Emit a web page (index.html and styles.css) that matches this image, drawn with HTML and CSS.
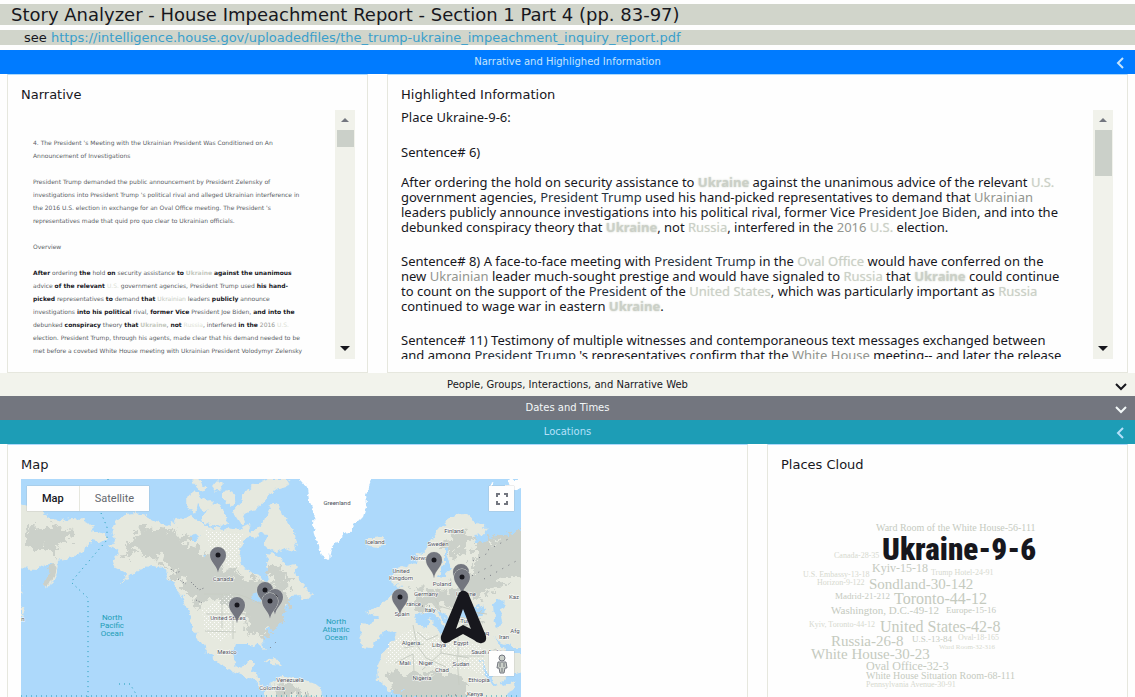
FILE: index.html
```html
<!DOCTYPE html>
<html lang="en">
<head>
<meta charset="utf-8">
<title>Story Analyzer</title>
<link rel="stylesheet" href="styles.css">
</head>
<body>
<header>
  <h1 class="title">Story Analyzer - House Impeachment Report - Section 1 Part 4 (pp. 83-97)</h1>
  <p class="source">see <a href="#">https://intelligence.house.gov/uploadedfiles/the_trump-ukraine_impeachment_inquiry_report.pdf</a></p>
</header>
<main>
  <button class="bar bar-blue" type="button">Narrative and Highlighed Information
    <svg class="chev" viewBox="0 0 12 12"><path d="M8 1L3 6l5 5"/></svg></button>
  <div class="row">
    <section class="card small">
      <h2>Narrative</h2>
      <div class="scroller">
        <div class="narrative">
          <p>4. The President 's Meeting with the Ukrainian President Was Conditioned on An<br>Announcement of Investigations</p>
          <p>President Trump demanded the public announcement by President Zelensky of<br>investigations into President Trump 's political rival and alleged Ukrainian interference in<br>the 2016 U.S. election in exchange for an Oval Office meeting. The President 's<br>representatives made that quid pro quo clear to Ukrainian officials.</p>
          <p>Overview</p>
          <p><b>After</b> ordering <b>the</b> hold <b>on</b> security assistance <b>to</b> <b class="pl">Ukraine</b> <b>against the unanimous</b><br>advice <b>of the relevant</b> <span class="pl faint">U.S.</span> government agencies, President Trump used <b>his hand-</b><br><b>picked</b> representatives <b>to</b> demand <b>that</b> <span class="pl">Ukrainian</span> leaders <b>publicly</b> announce<br>investigations <b>into his political</b> rival, <b>former Vice</b> President Joe Biden, <b>and into the</b><br>debunked <b>conspiracy</b> theory <b>that</b> <b class="pl">Ukraine</b>, <b>not</b> <span class="pl faint">Russia</span>, interfered <b>in the</b> <span class="date">2016</span> <span class="pl faint">U.S.</span><br>election. President Trump, through his agents, made clear that his demand needed to be<br>met before a coveted White House meeting with Ukrainian President Volodymyr Zelensky</p>
        </div>
        <div class="track" aria-hidden="true"><svg viewBox="0 0 10 6"><path d="M1 5l4-4 4 4z"/></svg><i class="thumb"></i><svg class="down" viewBox="0 0 10 6"><path d="M0 0h10L5 5z"/></svg></div>
      </div>
    </section>
    <section class="card large">
      <h2>Highlighted Information</h2>
      <div class="scroller">
        <div class="info">
          <p class="lead">Place Ukraine-9-6:</p>
          <p>Sentence# 6)</p>
          <p class="first">After ordering the hold on security assistance to <b class="hot">Ukraine</b> against the unanimous advice of the relevant <span class="place">U.S.</span><br>government agencies, <span class="who">President Trump</span> used his hand-picked representatives to demand that <span class="date">Ukrainian</span><br>leaders publicly announce investigations into his political rival, former Vice <span class="who">President Joe Biden</span>, and into the<br>debunked conspiracy theory that <b class="hot">Ukraine</b>, not <span class="place">Russia</span>, interfered in the <span class="date">2016</span> <span class="place">U.S.</span> election.</p>
          <p>Sentence# 8) A face-to-face meeting with <span class="who">President Trump</span> in the <span class="place">Oval Office</span> would have conferred on the<br>new <span class="date">Ukrainian</span> leader much-sought prestige and would have signaled to <span class="place">Russia</span> that <b class="hot">Ukraine</b> could continue<br>to count on the support of the <span class="who">President</span> of the <span class="place">United States</span>, which was particularly important as <span class="place">Russia</span><br>continued to wage war in eastern <b class="hot">Ukraine</b>.</p>
          <p>Sentence# 11) Testimony of multiple witnesses and contemporaneous text messages exchanged between<br>and among <span class="who">President Trump</span> 's representatives confirm that the <span class="date">White House</span> meeting-- and later the release</p>
        </div>
        <div class="track" aria-hidden="true"><svg viewBox="0 0 10 6"><path d="M1 5l4-4 4 4z"/></svg><i class="thumb tall"></i><svg class="down" viewBox="0 0 10 6"><path d="M0 0h10L5 5z"/></svg></div>
      </div>
    </section>
  </div>
  <button class="bar bar-light" type="button">People, Groups, Interactions, and Narrative Web
    <svg class="chev" viewBox="0 0 12 12"><path d="M1 4l5 5 5-5"/></svg></button>
  <button class="bar bar-gray" type="button">Dates and Times
    <svg class="chev" viewBox="0 0 12 12"><path d="M1 4l5 5 5-5"/></svg></button>
  <button class="bar bar-teal" type="button">Locations
    <svg class="chev" viewBox="0 0 12 12"><path d="M8 1L3 6l5 5"/></svg></button>
  <div class="row">
    <section class="card large">
      <h2>Map</h2>
      <div class="map">
        <svg class="world" viewBox="21 479 500 218" role="img" aria-label="World map with story places">
          <defs>
            <pattern id="light" width="4" height="4" patternUnits="userSpaceOnUse"><path class="grain2" d="M0 0h1v1H0zM2 2h1v1H2z"/></pattern>
            <filter id="coast" filterUnits="userSpaceOnUse" x="11" y="469" width="520" height="240"><feTurbulence type="fractalNoise" baseFrequency="0.14" numOctaves="3" seed="4"/><feDisplacementMap in="SourceGraphic" scale="9" xChannelSelector="R" yChannelSelector="G"/></filter>
            <filter id="relief" filterUnits="userSpaceOnUse" x="11" y="469" width="520" height="240"><feTurbulence type="fractalNoise" baseFrequency="0.12" numOctaves="4" seed="9"/><feDisplacementMap in="SourceGraphic" scale="26" xChannelSelector="R" yChannelSelector="G"/></filter>
            <g id="pin"><path d="M0 17C-1 9-8 6-8-1A8 8 0 0 1 8-1C8 6 1 9 0 17Z"/><circle class="dot" r="2.5" cy="-1"/></g>
          </defs>
          <rect class="sea" x="21" y="479" width="500" height="240"/>
          <g filter="url(#coast)">
          <g class="land">
            <path d="M11 500l25 8 16 10 10 3 9-3 9 1 8 4 6 6 9 4 4 6-3 5-8-2-7-1-4 5-1 7-9 3-8 3-9 2-1 11-4 9-6 8-2-3 1-8 5-8 2-7-8 2-6 4-28-1z"/>
            <path d="M21 586l2 5-2 5zM21 605l3 4-3 12z"/>
            <path d="M112 526l6-6 7-6 10-1 10 3 8 4 14 4 10-5 13-2 9 4 8 5 15 4 7-3 11 2 8-4 4 8-6 8-6 8-1 11 1 6 8 4 11 5 5 9 5-9-3-10 1-12 7 1 8 6 5 6 7-2 2 11 6 9 3 7-6 4-8 1-5 8-7 8-7 7-5 12-4 9 1 10-6-5-9-1-15 0-3 8 2 10 8 6 5-6 9 0-4 8 6 4 2 8 6 6 4-1 4 4-12-2-7-9-17-7-16-8-12-11-11-17-5-8-5-17-5-14-11-14-9-16-12-2-12 3-10 9-9 6 8-10-13-7-3-8 7-7-8-6 4-5-2-7z"/>
            <path d="M186 501l4-9 8 1 7 8 7-1-2 7-8 2-5-5-2 8-5-2zM202 517l5-10 9-4 8 7 3 12-7 6-10-3-7-3zM191 481l9-2 7 9-8 2zM211 487l7-8 5 5-7 9zM225 491l8-2 3 9-5 7-6-4zM236 518l6-8 4 8-5 8zM240 502l7-11 8-7 16-5h17l2 6-15 5-6 8-10 9-13 4-8 7-7-4zM249 534l12-8 7-19 10-5 5 13 10 15 4 16-5 6-9-4-9 4-10-7 3-11-6-1-7 7z"/>
            <path d="M298 591l9-3 5 7-8 5-6-4z"/>
            <path d="M367 539l7 0 8-1 3 5-6 4-8-1-5-2z"/>
            <path d="M396 570l3-3 5 1-1 7 4 3 4 3-3 5-11 1 4-5-4-2 3-4zM389 577l5-1 1 5-5 3z"/>
            <path d="M416 562l1-7 5-3 6-5 5-9 6-8 8-9 8-6 10-1 8 7 12 5 1 8-14 1 2 7 10 2 14-6 12-2 21-7V665h-10l-18 7-14 12-1-9-8-6-8-13-6-15-7-2-9 0-8 1-8-3-8-1-9 8 2-9-7 1-2-5-11 1-9 2-4-4-10 12-7 6-9-1-1-23 12 1 6-8-10-4-1-4 13-2 11-9 9-6 3-8-4-1-3 2-5-7z"/>
            <path d="M397 632l14-8 13-2 3 8 10 5 8 2 10-1 7 3 17 2 5 16 7 12 6 9 6 7 14-5-9 18-2 22h-83l-3-20-11-11-17 3-14-11-1-14 5-11z"/>
            <path d="M479 651l6-8 15-8 31 8v26l-33 12-7-13z"/>
            <path d="M259 719l6-26 11-15 10-3 17 5 14 5 8 13 9 21zM263 659l17 2 4 4-13-1z"/>
          </g>
          <g class="forest" filter="url(#relief)">
            <path d="M45 529l15-3 13 6-3 7-10 5-7 14-7-9-13-1-7-16zM132 532l13-4 19 2 14 4 13 12 21 8 17 17 15 7 18 3 14 9 20 3-6 14-8 10-10 17-24 2-4-22-20-13-20-2-4 11-6-3-6-16-9-12-14-19-27-7-16 5zM270 566l13 5 10 8-16 11-7-5zM444 542l11-12 15 3-3 14-12 7-2 7zM474 549l23-12 24-5h10v42l-26 9-38 19-30 5-13-10 7-8 21 1 8-12 14-6zM388 671l35 2 27-1 19 11v38h-47l-6-23-18-3z"/>
            <path d="M277 683l23 3 16 13h-44zM460 622l20-4 9 9-15 4zM412 593l20 1 11 7-22 10-7-5z"/>
          </g>
          <path class="forest" d="M46 586l-2-4 8-18 4 3-4 13z"/>
          <g class="sea">
            <path d="M190 536l5-3 4 3-3 5-6 0zM202 553l4 1-2 4zM250 596l7-4 7 8-8 5zM443 547l5-1-3 10 7 12-8 9-6-1 5-11zM413 618l10-6 8-2 9 10 4 9-3 6-6-10-5-5-4 7-8-3zM435 610l7 3 12 12 2 9-7-1-6-12zM461 610l7-6 6 5 8-5 3 7-8 6-12 1-5-3zM493 604l6-5 6 6-4 4 2 15-5 3-4-8zM494 635l6 7 13 5 8 0v6l-12 0-9-7zM477 655l5 8 8 12 8 11-3 1-10-13z"/>
          </g>
          <path class="ice" d="M280 469h10l11 11 7 8 2 13 4 9-1 14 2 8 2 14 5 10 7 4 2-12 8-10 12-9 12-12 4-13-1-10 10-25zM490 482l4 2-5 2zM505 487l4-6 12-2v9l-10 3z"/>
          </g>
          <path class="tundra" d="M205 530l22 3 16 0-5 22 2 12-12 0-18-18zM202 610l30-18 3 40-15 10-15-10zM388 644l22-15 30 9 41 7 8 33-19-8-50-4-34-2z"/>
          <path class="borders" d="M204 594h33l9 3 15 7M222 594v34m11-31v42m-27-25h44M205 631l31 1M413 625l4 20 9 13 20 9m-5-31v17l-19 17m19-17l28 5m-11-21v19l26 0m-27 0l2 29m-64-22l18-9 1 18m10-28l-20 4m60-18l22 11m-4-31l-9 10-15 2m3-24l11 14 15 2m-53-18l5 10 14 4m-15 25l-11 5-10-8m69 22l10-5 10 14m-38 65l15 4m-33-1l-6 19"/>
          <path class="dateline" d="M108 479v3m-7 31l6 14v13l-36 42 17 16v111M21 696h500M119 684h11l6 10"/>
          <path class="rivers" d="M171 569l5 4 5-2m-3 8l8 5m5-2l8 8 5-2m-8 12l6 3"/>
          <path class="towns" d="M473 561l15-8m-22 26l28-15m-10 15l34-19m-30-10l24-13M422 606h14M448 695h14m-178-2h28m-42-45l8-8"/>
          <g class="ocean"><text x="112" y="620">North</text><text x="112" y="628">Pacific</text><text x="112" y="636">Ocean</text><text x="336" y="624">North</text><text x="336" y="632">Atlantic</text><text x="336" y="640">Ocean</text></g>
          <g class="names">
            <text x="223" y="581">Canada</text><text x="228" y="620">United States</text><text x="227" y="654">Mexico</text><text x="337" y="505">Greenland</text><text x="375" y="544">Iceland</text><text x="454" y="533">Finland</text><text x="438" y="546">Sweden</text><text x="421" y="560">Norway</text><text x="401" y="573">United</text><text x="401" y="580">Kingdom</text><text x="442" y="586">Poland</text><text x="426" y="596">Germany</text><text x="412" y="606">France</text><text x="430" y="612">Italy</text><text x="402" y="616">Spain</text><text x="466" y="596">Ukraine</text><text x="469" y="623">Turkey</text><text x="484" y="635">Iraq</text><text x="504" y="639">Iran</text><text x="514" y="599">Kaz</text><text x="515" y="633">Afg</text><text x="411" y="645">Algeria</text><text x="439" y="647">Libya</text><text x="461" y="645">Egypt</text><text x="488" y="654">Saudi Arabia</text><text x="405" y="665">Mali</text><text x="426" y="665">Niger</text><text x="461" y="666">Sudan</text><text x="442" y="672">Chad</text><text x="422" y="680">Nigeria</text><text x="479" y="682">Ethiopia</text><text x="475" y="696">Kenya</text><text x="290" y="682">Venezuela</text><text x="272" y="690">Colombia</text><text x="23" y="621">n</text>
          </g>
          <g class="pins">
            <use href="#pin" x="218" y="556"/><use href="#pin" x="237" y="606"/><use href="#pin" x="265" y="591"/><use href="#pin" x="275" y="598"/><use href="#pin" x="270" y="602"/><use href="#pin" x="434" y="561"/><use href="#pin" x="400" y="598"/><use href="#pin" x="461" y="573"/><use href="#pin" x="462" y="578"/>
          </g>
          <path class="arrow" fill-rule="evenodd" d="M459 593q4-5 9 0l18 43q1 6-4 7-4 1-8-3l-11-6-11 6q-4 4-8 3-4-2-3-7zM463 609l-7 20 7-4 8 4z"/>
        </svg>
        <div class="types"><button type="button" class="on">Map</button><button type="button">Satellite</button></div>
        <button type="button" class="tool full" aria-label="Full screen"><svg viewBox="0 0 12 12"><path d="M1 4V1h3M8 1h3v3M11 8v3H8M4 11H1V8"/></svg></button>
        <button type="button" class="tool man" aria-label="Street view"><svg viewBox="0 0 12 20"><circle cx="6" cy="4" r="3"/><path d="M2 8h8l1 6H9l-1 5H4l-1-5H1zM6 14v4M4 9v4m4-4v4"/></svg></button>
      </div>
    </section>
    <section class="card small">
      <h2>Places Cloud</h2>
      <svg class="cloud" viewBox="781 479 334 218" role="img" aria-label="Places cloud">
        <text class="s10" x="876" y="531">Ward Room of the White House-56-111</text>
        <text class="top" x="882" y="560">Ukraine-9-6</text>
        <text class="s8 pale" x="834" y="558">Canada-28-35</text>
        <text class="s12" x="872" y="572">Kyiv-15-18</text>
        <text class="s8 pale" x="803" y="577">U.S. Embassy-13-18</text>
        <text class="s8 pale" x="931" y="575">Trump Hotel-24-91</text>
        <text class="s8 pale" x="817" y="585">Horizon-9-122</text>
        <text class="s15" x="869" y="589">Sondland-30-142</text>
        <text class="s9" x="835" y="599">Madrid-21-212</text>
        <text class="s16" x="894" y="604">Toronto-44-12</text>
        <text class="s11" x="831" y="614">Washington, D.C.-49-12</text>
        <text class="s9" x="946" y="613">Europe-15-16</text>
        <text class="s8 pale" x="809" y="627">Kyiv, Toronto-44-12</text>
        <text class="s16" x="880" y="632">United States-42-8</text>
        <text class="s15" x="831" y="646">Russia-26-8</text>
        <text class="s9" x="912" y="642">U.S.-13-84</text>
        <text class="s8 pale" x="958" y="640">Oval-18-165</text>
        <text class="s7 pale" x="939" y="649">Ward Room-32-316</text>
        <text class="s15" x="811" y="659">White House-30-23</text>
        <text class="s12" x="866" y="670">Oval Office-32-3</text>
        <text class="s10" x="866" y="679">White House Situation Room-68-111</text>
        <text class="s8 pale" x="866" y="687">Pennsylvania Avenue-30-91</text>
      </svg>
    </section>
  </div>
</main>
</body>
</html>
```
FILE: styles.css
```css
* { box-sizing: border-box; }
html, body { height: 100%; }
body { margin: 0; overflow: hidden; background: #fefefe; color: #17171d; font-family: Verdana, "DejaVu Sans", sans-serif; font-size: 13px; }
h1, h2, p { margin: 0; font-weight: normal; white-space: nowrap; }
header { padding-top: 4px; }
.title { height: 21px; padding-left: 11px; background: #d1d5cb; font-size: 18px; line-height: 22px; }
.source { height: 15px; margin: 5px 0; padding-left: 24px; background: #d1d5cb; line-height: 15px; }
.source a { color: #3a9fcb; text-decoration: none; }

.bar { position: relative; display: block; width: 100%; height: 24px; margin: 0; padding: 0; border: 0; font-family: inherit; font-size: 10px; line-height: 24px; text-align: center; color: #f3f8f8; }
.bar-blue { background: #007bff; color: #c5e4fb; }
.bar-light { height: 23px; background: #f2f3ec; color: #17171d; }
.bar-gray { background: #73767f; }
.bar-teal { background: #1d9db6; color: #b5e0fa; }
.chev { position: absolute; right: 8px; top: 7px; width: 12px; height: 12px; fill: none; stroke: currentColor; stroke-width: 2; }

.row { display: grid; grid-template-columns: repeat(12, 1fr); column-gap: 19px; padding: 0 7px; }
.card { min-width: 0; padding: 12px 12px 13px 13px; border: 1px solid #e6e7de; border-top-color: #add9fb; }
.small { grid-column: span 4; }
.large { grid-column: span 8; }
h2 { font-size: 13px; line-height: 16px; }
.scroller { display: flex; height: 249px; margin-top: 7px; overflow: hidden; }
.narrative, .info { flex: 1; min-width: 0; overflow: hidden; }
.narrative { padding: 26px 0 0 12px; color: #5c5f66; font-size: 6px; line-height: 13px; }
.narrative p { margin-bottom: 13px; }
.narrative b { color: #17171d; }
.narrative .pl { color: #c3c8bd; }
.narrative .faint { color: #dcdfd4; }
.info { font-family: "Noto Sans", sans-serif; }
.info p { margin-bottom: 19px; line-height: 15px; }
.info .lead { margin-bottom: 20px; }
.info .first { margin-top: -4px; }
.hot { color: #cbd0c7; text-shadow: 0 0 2px #cbd0c7; }
.place { color: #cbd0c7; text-shadow: 0 0 1px #dfe2d9; }
.date { color: #92958f; }
.who { color: #28333f; }
.track { display: flex; flex-direction: column; align-items: center; width: 20px; background: #f1f2eb; }
.track svg { width: 10px; height: 6px; margin: 7px 0; fill: #73767f; }
.track .down { margin: auto 0 7px; fill: #17171d; }
.thumb { width: 17px; height: 17px; background: #cbd0c9; }
.tall { height: 46px; }
.large .track { margin-right: 2px; }

.map { position: relative; width: 500px; height: 218px; margin-top: 6px; overflow: hidden; }
.world { display: block; width: 100%; height: 100%; }
.sea { fill: #add9fb; }
.land { fill: #e6e9df; }
.forest { fill: #cbd0c9; }
.tundra { fill: url(#light); }
.grain2, .ice { fill: #fefefe; }
.borders, .dateline, .rivers, .towns { fill: none; stroke: #c8cdc4; stroke-width: 1; }
.dateline { stroke: #1d9db6; stroke-dasharray: 1 4; }
.rivers, .towns { stroke: #73767f; stroke-dasharray: 1 2; }
.towns { stroke-dasharray: 1 6; }
.names, .ocean { font-family: Roboto, sans-serif; font-size: 6px; text-anchor: middle; }
.names { fill: #4c4f58; stroke: #fefefe; stroke-width: 1px; paint-order: stroke; }
.ocean { fill: #1d9db6; font-size: 8px; }
.pins { fill: #73767f; stroke: #d8dbd4; stroke-width: 1px; paint-order: stroke; }
.dot { fill: #17171d; stroke: none; }
.arrow { fill: #17171d; }
.types { position: absolute; left: 6px; top: 7px; display: flex; background: #fefefe; box-shadow: 0 0 1px #999; }
.types button { height: 25px; padding: 0 15px; border: 0; background: none; font-family: Roboto, sans-serif; font-size: 11px; color: #65686f; }
.types .on { border-right: 1px solid #e6e7de; color: #17171d; font-weight: 500; }
.tool { position: absolute; right: 7px; width: 25px; height: 25px; padding: 0; border: 0; background: #fefefe; box-shadow: 0 0 1px #999; }
.tool svg { display: block; width: 12px; height: 12px; margin: auto; fill: none; stroke: #73767f; stroke-width: 2; }
.full { top: 7px; }
.man { top: 172px; }
.man svg { height: 20px; fill: #cbd0c9; stroke-width: 1; }

.cloud { display: block; width: 334px; height: 218px; margin-top: 6px; font-family: "Liberation Serif", serif; fill: #c5cabf; }
.pale { fill: #d6d9cf; }
.s7 { font-size: 7px; }
.s8 { font-size: 8px; }
.s9 { font-size: 9px; }
.s10 { font-size: 10px; }
.s11 { font-size: 11px; }
.s12 { font-size: 12px; }
.s15 { font-size: 15px; }
.s16 { font-size: 16px; }
.top { font-family: Impact, "Liberation Sans Narrow", "Roboto Condensed", "Open Sans Condensed", Roboto, sans-serif; font-size: 31px; font-weight: 900; fill: #17171d; }
```
